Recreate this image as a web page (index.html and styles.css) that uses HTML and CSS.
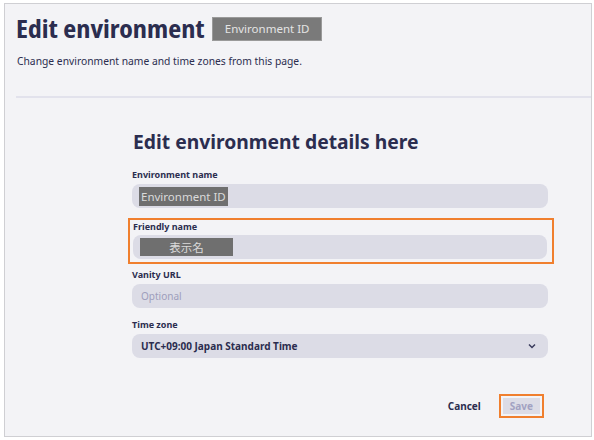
FILE: index.html
```html
<!DOCTYPE html>
<html>
<head>
<meta charset="utf-8">
<link rel="stylesheet" href="styles.css">
</head>
<body>
<div class="frame">
  <div class="header">
    <div class="title-row">
      <h1 class="title">Edit environment</h1>
      <span class="badge">Environment ID</span>
    </div>
    <p class="subtitle">Change environment name and time zones from this page.</p>
  </div>
  <div class="form">
    <h2 class="form-title">Edit environment details here</h2>
    <div class="field">
      <label class="label">Environment name</label>
      <div class="input"><span class="mask mask-id">Environment ID</span></div>
    </div>
    <div class="field highlight">
      <label class="label">Friendly name</label>
      <div class="input"><span class="mask mask-jp">表示名</span></div>
    </div>
    <div class="field">
      <label class="label">Vanity URL</label>
      <div class="input"><span class="placeholder">Optional</span></div>
    </div>
    <div class="field">
      <label class="label">Time zone</label>
      <div class="input select">
        <span class="select-text">UTC+09:00 Japan Standard Time</span>
        <svg class="chev" width="8" height="6" viewBox="0 0 8 6"><path d="M1 1.5 L4 4.5 L7 1.5" fill="none" stroke="#3a3b5c" stroke-width="1.5"/></svg>
      </div>
    </div>
    <div class="actions">
      <span class="cancel">Cancel</span>
      <span class="save-wrap"><span class="save">Save</span></span>
    </div>
  </div>
</div>
</body>
</html>
```
FILE: styles.css
```css
* { box-sizing: border-box; }
html, body { margin: 0; padding: 0; background: #ffffff; }
body { font-family: "Noto Sans", "Noto Sans CJK JP", sans-serif; color: #2b2d4f; }
.frame {
  margin: 3px 0 0 4px;
  width: 588px;
  height: 434px;
  border: 1px solid #cfcfd3;
  background: #f3f3f6;
}
.header {
  margin-left: 11px;
  padding-top: 10px;
  height: 94px;
  border-bottom: 2px solid #e2e2ec;
}
.title-row { display: flex; align-items: center; }
.title {
  margin: 0;
  font-family: "Noto Sans Display", "Noto Sans", sans-serif;
  font-stretch: 75%;
  font-size: 24.7px;
  font-weight: 700;
  line-height: 30px;
}
.badge {
  margin-left: 7px;
  background: #7a7a7a;
  color: #e4e4e4;
  font-size: 11.5px;
  line-height: 22px;
  height: 24px;
  padding: 0 12px;
  border: 1px solid #9a9a9a;
}
.subtitle {
  margin: 10px 0 0 1px;
  font-size: 10.3px;
  line-height: 14px;
}
.form {
  margin-left: 127px;
  width: 416px;
  padding-top: 31px;
}
.form-title {
  margin: 0 0 14px 1px;
  font-size: 19.3px;
  font-weight: 700;
  line-height: 26px;
}
.field { padding-bottom: 11px; }
.label {
  display: block;
  font-size: 9px;
  font-weight: 700;
  line-height: 12px;
  margin-bottom: 3px;
}
.input {
  height: 24px;
  background: #dcdce6;
  border-radius: 8px;
  display: flex;
  align-items: center;
  padding-left: 7px;
}
.mask {
  background: #6f6f6f;
  color: #dadada;
  font-size: 11.5px;
  line-height: 19px;
  height: 19px;
  padding: 0 2px;
}
.mask-jp {
  width: 93px;
  height: 18px;
  line-height: 18px;
  text-align: center;
  font-family: "Noto Sans CJK JP", sans-serif;
  font-size: 11.5px;
}
.highlight {
  margin: -1px -6px 5px -4px;
  padding: 1px 5px 3px 3px;
  border: 2.5px solid #f07f2e;
}
.highlight .label { margin-bottom: 2px; }
.placeholder {
  color: #9e9ebc;
  font-size: 10px;
  padding-left: 2px;
}
.select { justify-content: space-between; padding-right: 12px; padding-left: 9px; }
.select-text { font-size: 10px; font-weight: 700; color: #2b2d4f; }
.actions {
  display: flex;
  justify-content: flex-end;
  align-items: center;
  margin-top: 25px;
  padding-right: 4px;
}
.cancel {
  font-size: 10px;
  font-weight: 700;
  margin-right: 18px;
}
.save-wrap {
  border: 2.5px solid #f07f2e;
  padding: 2px;
}
.save {
  display: block;
  background: #dcdce6;
  color: #a2a2c2;
  font-size: 10px;
  font-weight: 700;
  padding: 0 7px;
  line-height: 16px;
}
```
